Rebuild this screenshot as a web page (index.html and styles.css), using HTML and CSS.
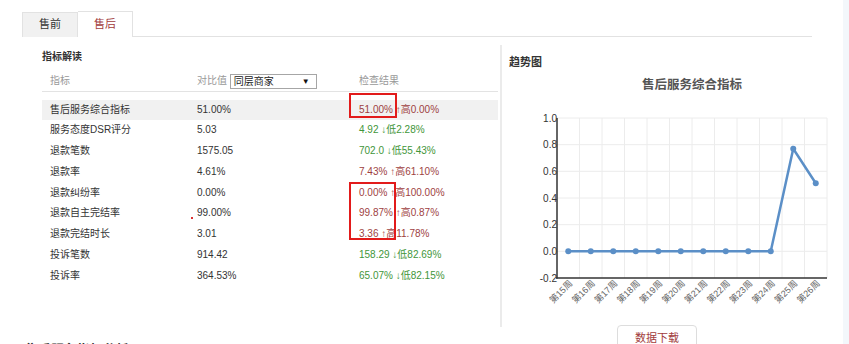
FILE: index.html
```html
<!DOCTYPE html>
<html lang="zh-CN">
<head>
  <meta charset="UTF-8">
  <meta name="viewport" content="width=device-width, initial-scale=1.0">
  <title>售后服务指标</title>
  <link rel="stylesheet" href="styles.css">
</head>
<body>
  <div id="wrap">
    <div id="page">
      <ul class="tabs">
        <li class="tab">售前</li>
        <li class="tab active">售后</li>
      </ul>
      <div id="content">
        <div id="indicators" class="panel">
          <h2>指标解读</h2>
          <div class="row head">
            <span class="c1">指标</span>
            <span class="c2">对比值 <span class="select"><span>同层商家</span><span class="caret">▼</span></span></span>
            <span class="c3">检查结果</span>
          </div>
          <div class="rows">
            <div class="row odd"><span class="c1">售后服务综合指标</span><span class="c2">51.00%</span><span class="c3 up">51.00% ↑高0.00%</span></div>
            <div class="row"><span class="c1">服务态度DSR评分</span><span class="c2">5.03</span><span class="c3 down">4.92 ↓低2.28%</span></div>
            <div class="row"><span class="c1">退款笔数</span><span class="c2">1575.05</span><span class="c3 down">702.0 ↓低55.43%</span></div>
            <div class="row"><span class="c1">退款率</span><span class="c2">4.61%</span><span class="c3 up">7.43% ↑高61.10%</span></div>
            <div class="row"><span class="c1">退款纠纷率</span><span class="c2">0.00%</span><span class="c3 up">0.00% ↑高100.00%</span></div>
            <div class="row"><span class="c1">退款自主完结率</span><span class="c2">99.00%</span><span class="c3 up">99.87% ↑高0.87%</span></div>
            <div class="row"><span class="c1">退款完结时长</span><span class="c2">3.01</span><span class="c3 up">3.36 ↑高11.78%</span></div>
            <div class="row"><span class="c1">投诉笔数</span><span class="c2">914.42</span><span class="c3 down">158.29 ↓低82.69%</span></div>
            <div class="row"><span class="c1">投诉率</span><span class="c2">364.53%</span><span class="c3 down">65.07% ↓低82.15%</span></div>
            <span class="mark mark-a"></span>
            <span class="mark mark-b"></span>
            <span class="dot"></span>
          </div>
        </div>
        <div id="trend" class="panel">
          <h2>趋势图</h2>
          <svg class="chart" width="331" height="240" viewBox="0 0 331 240">
            <text x="183" y="17" class="title" text-anchor="middle">售后服务综合指标</text>
            <g class="grid">
              <line x1="48" y1="46" x2="318" y2="46"/>
              <line x1="48" y1="72.7" x2="318" y2="72.7"/>
              <line x1="48" y1="99.3" x2="318" y2="99.3"/>
              <line x1="48" y1="126" x2="318" y2="126"/>
              <line x1="48" y1="152.7" x2="318" y2="152.7"/>
              <line x1="48" y1="179.3" x2="318" y2="179.3"/>
              <line x1="70.5" y1="46" x2="70.5" y2="206"/>
              <line x1="93" y1="46" x2="93" y2="206"/>
              <line x1="115.5" y1="46" x2="115.5" y2="206"/>
              <line x1="138" y1="46" x2="138" y2="206"/>
              <line x1="160.5" y1="46" x2="160.5" y2="206"/>
              <line x1="183" y1="46" x2="183" y2="206"/>
              <line x1="205.5" y1="46" x2="205.5" y2="206"/>
              <line x1="228" y1="46" x2="228" y2="206"/>
              <line x1="250.5" y1="46" x2="250.5" y2="206"/>
              <line x1="273" y1="46" x2="273" y2="206"/>
              <line x1="295.5" y1="46" x2="295.5" y2="206"/>
              <line x1="318" y1="46" x2="318" y2="206"/>
            </g>
            <g class="axis">
              <line x1="48" y1="46" x2="48" y2="206.5"/>
              <line x1="47" y1="206" x2="318" y2="206"/>
            </g>
            <g class="ylabels" text-anchor="end">
              <text x="48" y="49.5">1.0</text>
              <text x="48" y="76.2">0.8</text>
              <text x="48" y="102.8">0.6</text>
              <text x="48" y="129.5">0.4</text>
              <text x="48" y="156.2">0.2</text>
              <text x="48" y="182.8">0.0</text>
              <text x="48" y="209.5">-0.2</text>
            </g>
            <g class="xlabels" text-anchor="end">
              <text transform="translate(64,212) rotate(-45)">第15周</text>
              <text transform="translate(86.5,212) rotate(-45)">第16周</text>
              <text transform="translate(109,212) rotate(-45)">第17周</text>
              <text transform="translate(131.5,212) rotate(-45)">第18周</text>
              <text transform="translate(154,212) rotate(-45)">第19周</text>
              <text transform="translate(176.5,212) rotate(-45)">第20周</text>
              <text transform="translate(199,212) rotate(-45)">第21周</text>
              <text transform="translate(221.5,212) rotate(-45)">第22周</text>
              <text transform="translate(244,212) rotate(-45)">第23周</text>
              <text transform="translate(266.5,212) rotate(-45)">第24周</text>
              <text transform="translate(289,212) rotate(-45)">第25周</text>
              <text transform="translate(311.5,212) rotate(-45)">第26周</text>
            </g>
            <polyline class="series" points="59.25,179.3 81.75,179.3 104.25,179.3 126.75,179.3 149.25,179.3 171.75,179.3 194.25,179.3 216.75,179.3 239.25,179.3 261.75,179.3 284.25,76.7 306.75,111.3"/>
            <g class="points">
              <circle cx="59.25" cy="179.3" r="3"/>
              <circle cx="81.75" cy="179.3" r="3"/>
              <circle cx="104.25" cy="179.3" r="3"/>
              <circle cx="126.75" cy="179.3" r="3"/>
              <circle cx="149.25" cy="179.3" r="3"/>
              <circle cx="171.75" cy="179.3" r="3"/>
              <circle cx="194.25" cy="179.3" r="3"/>
              <circle cx="216.75" cy="179.3" r="3"/>
              <circle cx="239.25" cy="179.3" r="3"/>
              <circle cx="261.75" cy="179.3" r="3"/>
              <circle cx="284.25" cy="76.7" r="3"/>
              <circle cx="306.75" cy="111.3" r="3"/>
            </g>
          </svg>
        </div>
      </div>
      <div id="foot">
        <h3>售后服务指标分析</h3>
        <button class="btn">数据下载</button>
      </div>
    </div>
    <div id="edge"></div>
  </div>
</body>
</html>
```

FILE: styles.css
```css
html, body {
  margin: 0;
  padding: 0;
  background: #fff;
}
body {
  font-family: 'Liberation Sans', 'Noto Sans CJK SC', sans-serif;
  font-size: 10px;
  color: #333;
  overflow: hidden;
}
#wrap {
  display: flex;
  height: 344px;
}
#page {
  flex: 1;
  padding: 11px 0 0 22px;
}
#edge {
  width: 6px;
  background: #f3f7fb;
}
.tabs {
  display: flex;
  list-style: none;
  margin: 0;
  padding: 0;
  width: 790px;
  height: 25px;
  border-bottom: 1px solid #e2e2e2;
}
.tab {
  box-sizing: border-box;
  width: 56px;
  height: 25px;
  margin-top: 1px;
  line-height: 23px;
  text-align: center;
  font-size: 11px;
  background: #f1f1f1;
  border: 1px solid #e2e2e2;
  border-bottom: none;
  color: #333;
}
.tab.active {
  width: 55px;
  height: 26px;
  margin-top: 0;
  line-height: 25px;
  background: #fff;
  border-left: none;
  color: #a23c3c;
}
#content {
  display: flex;
  padding-left: 20px;
  margin-top: 8px;
}
.panel h2 {
  margin: 0;
  font-size: 10px;
  line-height: 16px;
  font-weight: bold;
  color: #333;
}
#trend h2 {
  font-size: 11px;
}
#indicators {
  width: 456px;
  padding-top: 4px;
}
.row {
  display: flex;
  height: 20.75px;
  line-height: 20.75px;
  white-space: nowrap;
}
.row.head {
  height: 21px;
  line-height: 21px;
  margin-top: 5px;
  border-bottom: 1px solid #e3e3e3;
  color: #999;
}
.row.odd {
  background: #f1f1f1;
}
.c1 {
  width: 147px;
  padding-left: 8px;
}
.c2 {
  width: 162px;
}
.c3 {
  flex: 1;
}
.up {
  color: #9e3f3f;
}
.down {
  color: #3f963a;
}
.select {
  display: inline-flex;
  justify-content: space-between;
  align-items: center;
  box-sizing: border-box;
  width: 87px;
  height: 15px;
  line-height: 13px;
  padding: 0 6px 0 3px;
  border: 1px solid #a6a6a6;
  color: #222;
  vertical-align: -1px;
}
.caret {
  font-size: 8px;
  color: #111;
}
.rows {
  position: relative;
  margin-top: 7.5px;
}
.mark {
  position: absolute;
  border: 2px solid #e21b1b;
  box-sizing: border-box;
}
.mark-a {
  left: 307px;
  top: -6.5px;
  width: 48px;
  height: 25px;
}
.mark-b {
  left: 307px;
  top: 82.5px;
  width: 47px;
  height: 58px;
}
.dot {
  position: absolute;
  left: 149px;
  top: 117px;
  width: 2px;
  height: 2px;
  background: #d33;
}
#trend {
  flex: 1;
  margin-left: 2px;
  border-left: 2px solid #ebebeb;
  padding: 9px 0 15px 7px;
}
.chart {
  display: block;
  margin-top: 2px;
  font-family: 'Liberation Sans', 'Noto Sans CJK SC', sans-serif;
}
.chart .title {
  font-size: 12.5px;
  font-weight: bold;
  fill: #555;
}
.grid line {
  stroke: #ececec;
  stroke-width: 1;
}
.axis line {
  stroke: #333;
  stroke-width: 1.5;
}
.ylabels text {
  font-size: 10px;
  fill: #333;
}
.xlabels text {
  font-size: 9px;
  fill: #666;
}
.series {
  fill: none;
  stroke: #5b8fc7;
  stroke-width: 2.5;
}
.points circle {
  fill: #5b8fc7;
}
#foot {
  display: flex;
  align-items: flex-start;
  margin-top: -2px;
}
#foot h3 {
  margin: 16px 0 0 3px;
  width: 592px;
  font-size: 13px;
  line-height: 18px;
  color: #333;
}
.btn {
  width: 80px;
  height: 24px;
  background: #fff;
  border: 1px solid #ddd;
  border-radius: 4px;
  color: #a23c3c;
  font-family: 'Liberation Sans', 'Noto Sans CJK SC', sans-serif;
  font-size: 11px;
}
```
